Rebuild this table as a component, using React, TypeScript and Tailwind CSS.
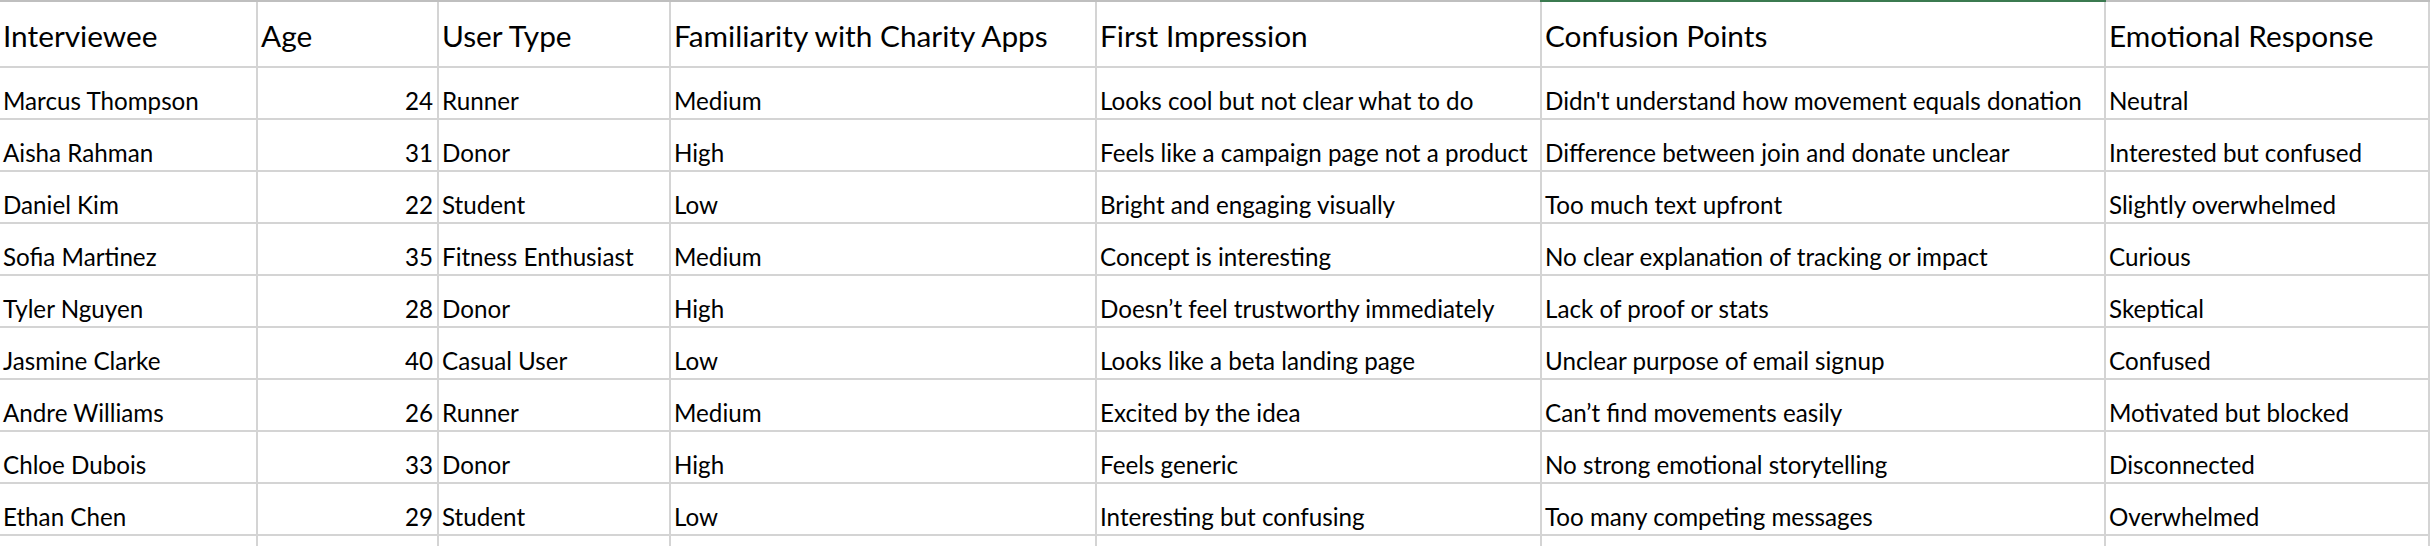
import React from "react";

const headers = [
  "Interviewee",
  "Age",
  "User Type",
  "Familiarity with Charity Apps",
  "First Impression",
  "Confusion Points",
  "Emotional Response",
];

const rows: (string | number)[][] = [
  ["Marcus Thompson", 24, "Runner", "Medium", "Looks cool but not clear what to do", "Didn't understand how movement equals donation", "Neutral"],
  ["Aisha Rahman", 31, "Donor", "High", "Feels like a campaign page not a product", "Difference between join and donate unclear", "Interested but confused"],
  ["Daniel Kim", 22, "Student", "Low", "Bright and engaging visually", "Too much text upfront", "Slightly overwhelmed"],
  ["Sofia Martinez", 35, "Fitness Enthusiast", "Medium", "Concept is interesting", "No clear explanation of tracking or impact", "Curious"],
  ["Tyler Nguyen", 28, "Donor", "High", "Doesn\u2019t feel trustworthy immediately", "Lack of proof or stats", "Skeptical"],
  ["Jasmine Clarke", 40, "Casual User", "Low", "Looks like a beta landing page", "Unclear purpose of email signup", "Confused"],
  ["Andre Williams", 26, "Runner", "Medium", "Excited by the idea", "Can\u2019t find movements easily", "Motivated but blocked"],
  ["Chloe Dubois", 33, "Donor", "High", "Feels generic", "No strong emotional storytelling", "Disconnected"],
  ["Ethan Chen", 29, "Student", "Low", "Interesting but confusing", "Too many competing messages", "Overwhelmed"],
];

const gridCols = "grid grid-cols-[258px_181px_232px_426px_445px_564px_1fr]";

export default function App() {
  return (
    <div
      className="w-[2430px] h-[546px] overflow-hidden bg-white text-black"
      style={{ fontFamily: "Lato, 'Noto Sans', sans-serif" }}
    >
      <div className="flex h-[2px]">
        <div className="w-[1540px] bg-[#bfbfbf]" />
        <div className="w-[566px] bg-[#3b7a50]" />
        <div className="flex-1 bg-[#bfbfbf]" />
      </div>
      <div className={gridCols}>
        {headers.map((h) => (
          <div
            key={h}
            className="h-[66px] border-b-2 border-r-2 border-[#d4d4d4] pl-[3px] pt-[19px] text-[29.8px] leading-none whitespace-nowrap overflow-hidden"
          >
            {h}
          </div>
        ))}
        {rows.map((r, ri) =>
          r.map((c, ci) => (
            <div
              key={`${ri}-${ci}`}
              className={
                ci === 1
                  ? "h-[52px] border-b-2 border-r-2 border-[#d4d4d4] flex items-end justify-end pr-[4px] pb-[5px] text-[24.2px] leading-none whitespace-nowrap overflow-hidden"
                  : "h-[52px] border-b-2 border-r-2 border-[#d4d4d4] flex items-end pl-[3px] pb-[5px] text-[24.2px] leading-none whitespace-nowrap overflow-hidden"
              }
            >
              {c}
            </div>
          ))
        )}
        {headers.map((h) => (
          <div key={`e-${h}`} className="h-[52px] border-b-2 border-r-2 border-[#d4d4d4]" />
        ))}
      </div>
    </div>
  );
}
